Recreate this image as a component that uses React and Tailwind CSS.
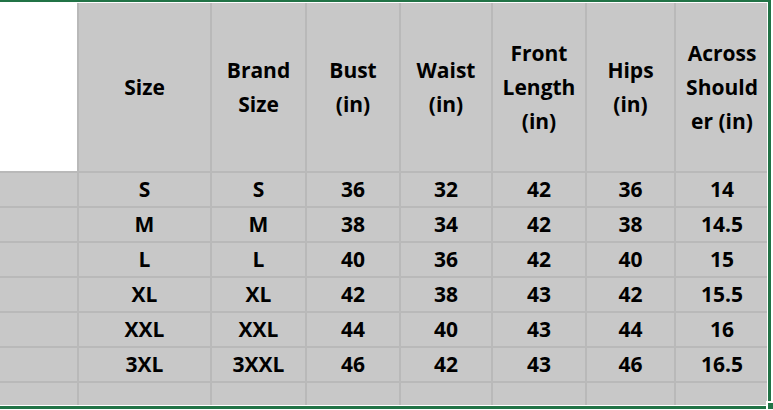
import React from "react";

const headers = [
  ["Size"],
  ["Brand", "Size"],
  ["Bust", "(in)"],
  ["Waist", "(in)"],
  ["Front", "Length", "(in)"],
  ["Hips", "(in)"],
  ["Across", "Should", "er (in)"],
];

const rows = [
  ["S", "S", "36", "32", "42", "36", "14"],
  ["M", "M", "38", "34", "42", "38", "14.5"],
  ["L", "L", "40", "36", "42", "40", "15"],
  ["XL", "XL", "42", "38", "43", "42", "15.5"],
  ["XXL", "XXL", "44", "40", "43", "44", "16"],
  ["3XL", "3XXL", "46", "42", "43", "46", "16.5"],
];

export default function App() {
  return (
    <div className="relative w-[773px] h-[410px] bg-white overflow-hidden font-['Open_Sans',sans-serif] text-black">
      <div className="w-[771px] h-[409px] border-t-2 border-r-[3px] border-b-[3px] border-[#217346] bg-white pt-[1px] pr-[1px] pb-[1px]">
        <div className="grid grid-cols-[77px_131px_93px_92px_90px_92px_87px_92px] grid-rows-[168px_repeat(6,33px)_30px] gap-[2px] bg-[#b9b9b9] h-full overflow-hidden">
          <div className="bg-white" />
          {headers.map((h, i) => (
            <div
              key={i}
              className="bg-[#c8c8c8] flex flex-col items-center justify-center text-[21px] leading-[34px] font-bold text-center"
            >
              {h.map((l, j) => (
                <span key={j} className="whitespace-nowrap">{l}</span>
              ))}
            </div>
          ))}
          {rows.map((r, i) => (
            <React.Fragment key={i}>
              <div className="bg-[#c8c8c8]" />
              {r.map((c, j) => (
                <div
                  key={j}
                  className="bg-[#c8c8c8] flex items-center justify-center text-[21px] font-bold leading-none"
                >
                  {c}
                </div>
              ))}
            </React.Fragment>
          ))}
          {Array.from({ length: 8 }).map((_, i) => (
            <div key={i} className="bg-[#c8c8c8]" />
          ))}
        </div>
      </div>
      <div className="absolute left-[766px] top-[401px] w-[7px] h-[9px] bg-white" />
      <div className="absolute left-[768px] top-[403px] w-[5px] h-[6px] bg-[#217346]" />
    </div>
  );
}
